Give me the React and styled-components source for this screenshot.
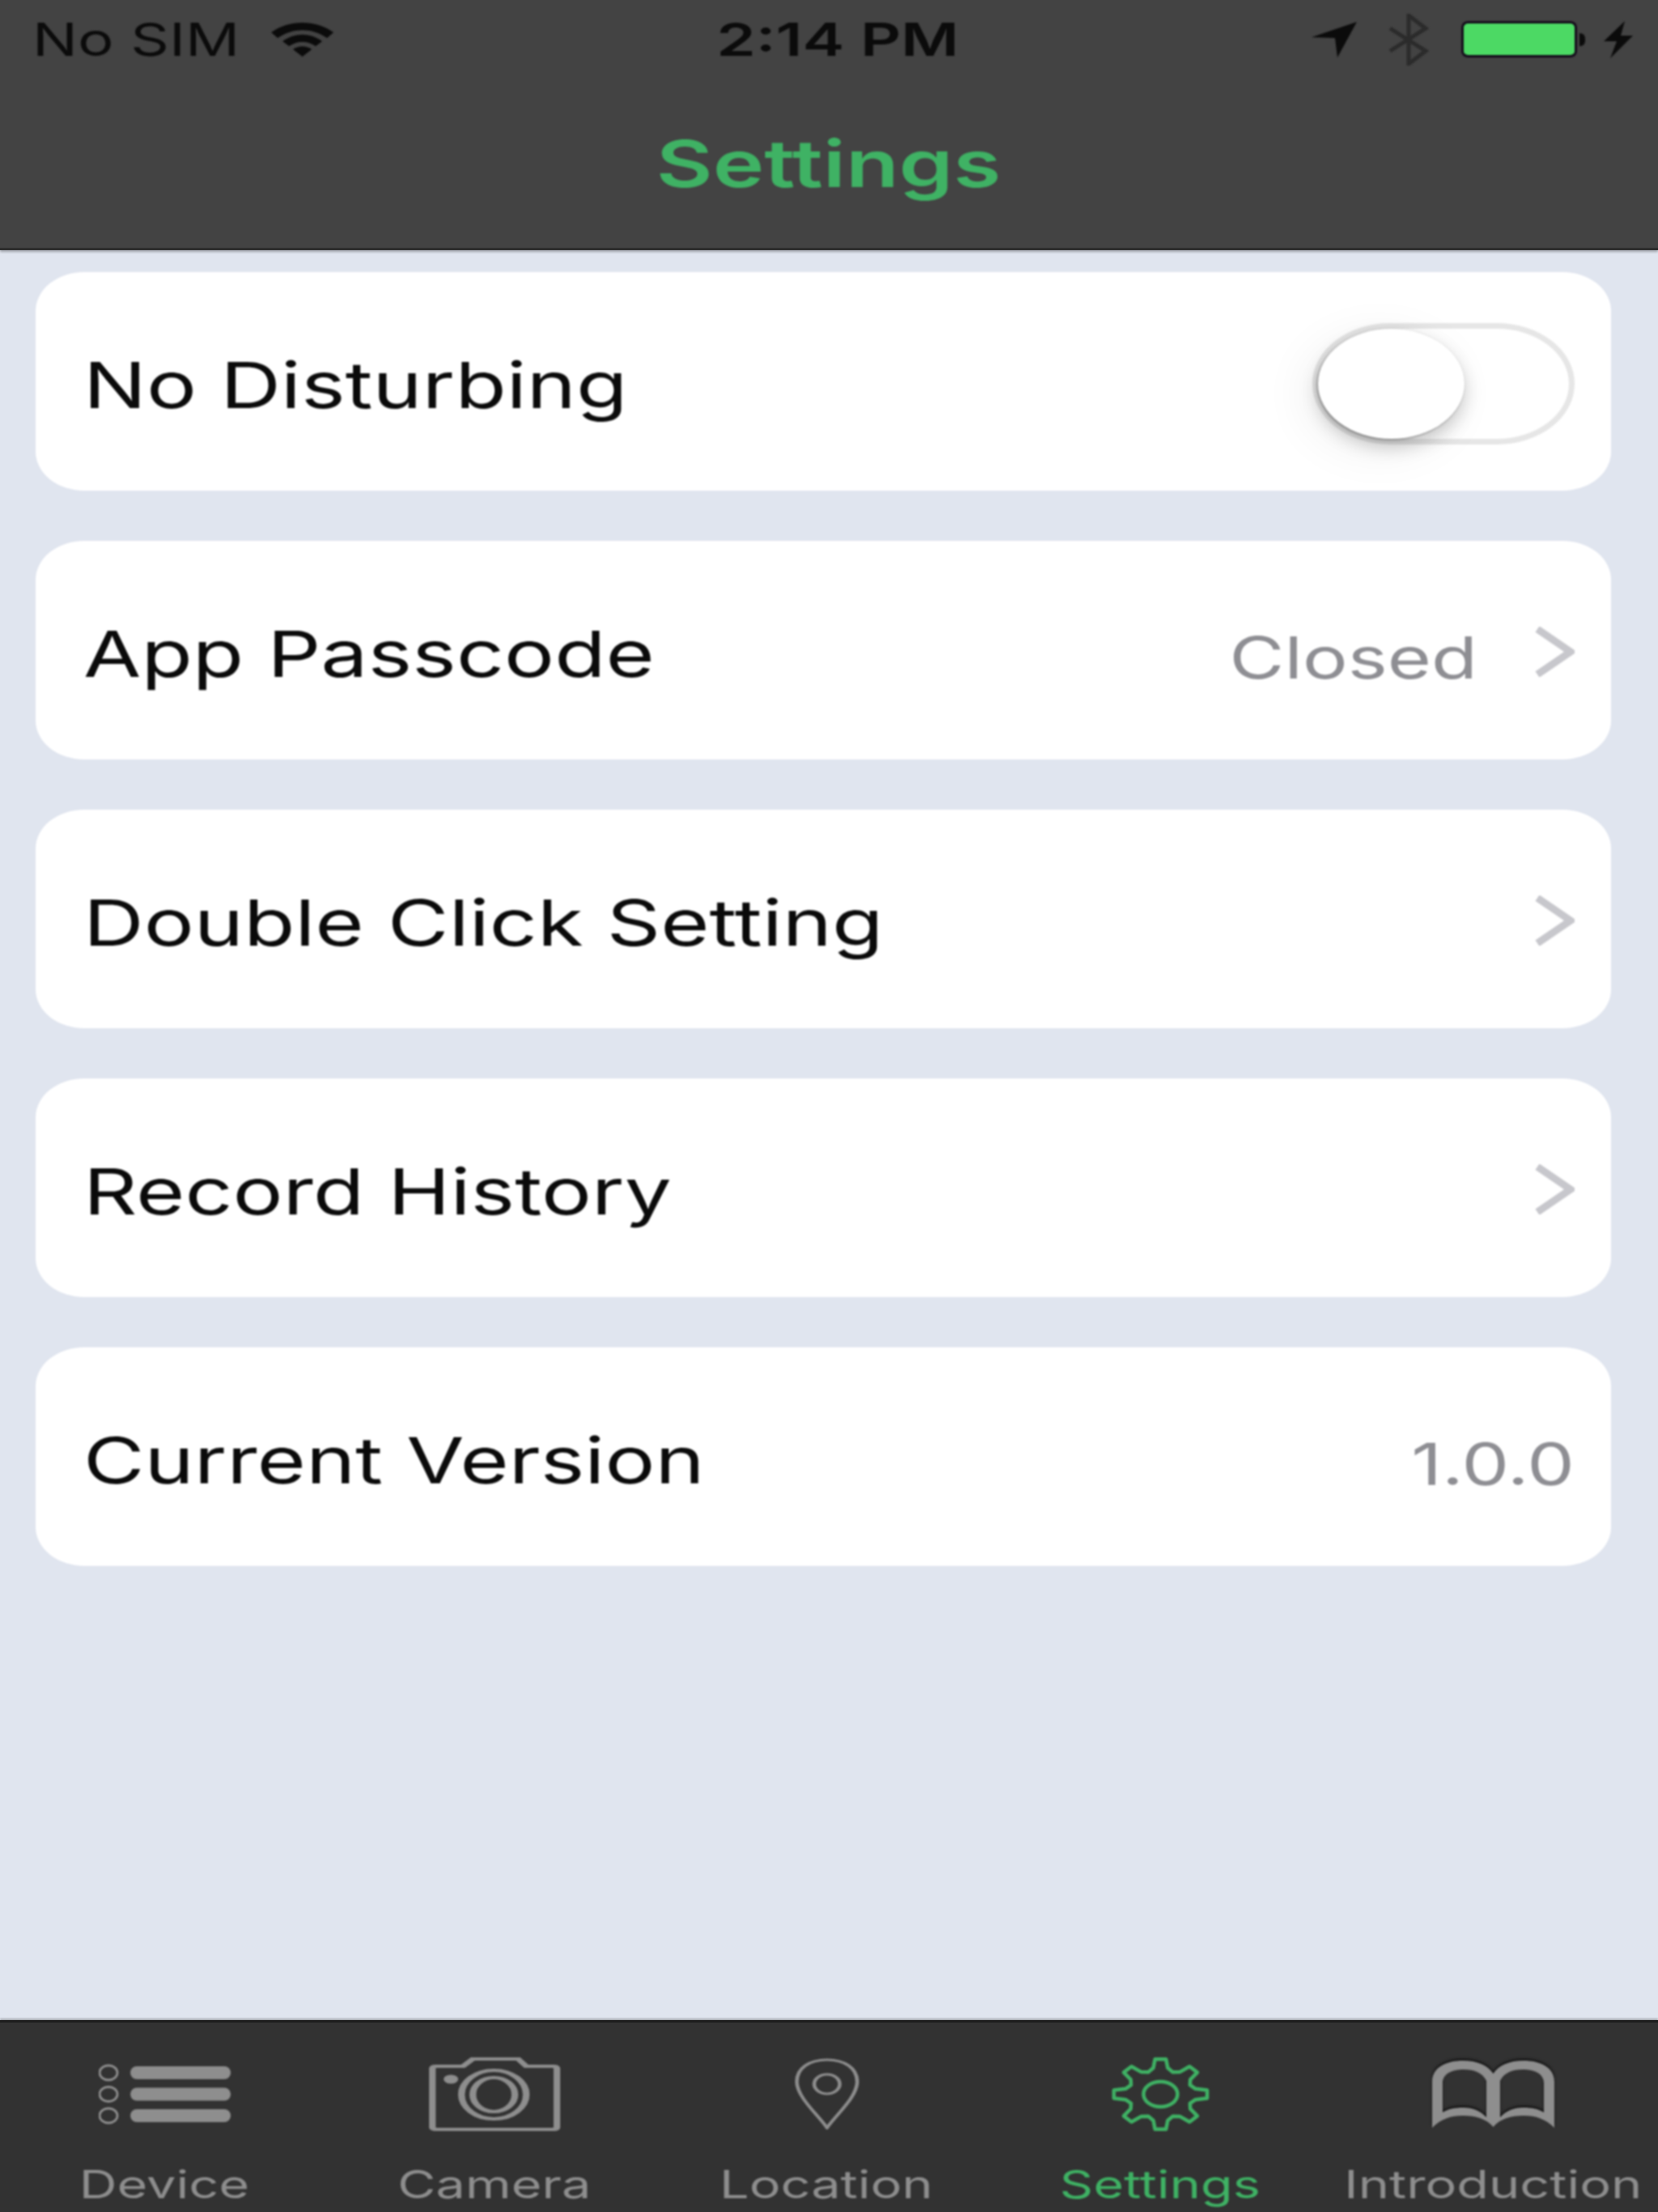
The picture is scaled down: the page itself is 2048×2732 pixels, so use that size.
import React from "react";
import styled, { createGlobalStyle, css } from "styled-components";

const Global = createGlobalStyle`
  html, body {
    margin: 0;
    padding: 0;
    background: #e0e5ef;
  }
  body {
    font-family: Inter, "Liberation Sans", Arial, sans-serif;
  }
`;

// the reference is an upscaled shot, everything on it is a bit soft
const soft = css`
  filter: blur(0.8px);
`;

const Screen = styled.div`
  width: 2048px;
  height: 2732px;
  display: flex;
  flex-direction: column;
  overflow: hidden;
  background: #e0e5ef;
`;

// the whole screenshot is stretched wider than tall, text gets the same treatment
const Stretch = styled.span`
  display: inline-block;
  white-space: nowrap;
  transform: scaleX(${({ $x }) => $x || 1.31});
  transform-origin: ${({ $origin }) => $origin || "left"} center;
`;

const Header = styled.header`
  height: 309px;
  flex: none;
  box-sizing: border-box;
  background: #434343;
  border-bottom: 3px solid #2e2e2e;
  box-shadow: 0 2px 3px rgba(0, 0, 0, 0.3);
  padding: 0 31px 0 40px;
`;

const StatusBar = styled.div`
  ${soft}
  height: 98px;
  display: grid;
  grid-template-columns: 1fr auto 1fr;
  align-items: center;
  color: #0b0b0b;
  font-size: 56px;
`;

const StatusLeft = styled.div`
  display: flex;
  align-items: center;
  gap: 44px;
`;

const StatusTime = styled.div`
  font-weight: 600;
  transform: translateX(6px);
`;

const StatusRight = styled.div`
  display: flex;
  align-items: center;
  justify-content: flex-end;
`;

const Title = styled.h1`
  ${soft}
  margin: 0 9px 0 0;
  padding-top: 50px;
  text-align: center;
  color: #3fb264;
  font-size: 80px;
  line-height: 108px;
  font-weight: 600;
`;

const List = styled.main`
  ${soft}
  flex: 1;
  display: flex;
  flex-direction: column;
  gap: 62px;
  padding: 27px 58px 0 44px;
`;

const Row = styled.section`
  height: 270px;
  box-sizing: border-box;
  display: flex;
  align-items: center;
  padding: 0 45px 0 59px;
  background: #fff;
  border-radius: 60px / 48px;
`;

const Label = styled.div`
  flex: 1;
  color: #0a0a0a;
  font-size: 79px;
  margin-top: 8px;
`;

const Value = styled.div`
  color: #8e8e93;
  font-size: 71px;
  margin-top: 18px;
  margin-right: ${({ $gap }) => $gap || 0}px;
`;

const Chevron = styled.svg`
  width: 49px;
  height: 62px;
  margin-top: 4px;
  flex: none;
`;

const Toggle = styled.div`
  position: relative;
  width: 324px;
  height: 150px;
  box-sizing: border-box;
  border: 7px solid #e6e6e6;
  border-radius: 96px / 75px;
  margin-top: 6px;
`;

const Thumb = styled.div`
  position: absolute;
  left: 0;
  top: 0;
  width: 181px;
  height: 136px;
  border-radius: 50%;
  background: #fff;
  box-shadow: -1px 1px 3px rgba(0, 0, 0, 0.4), 0 10px 22px rgba(0, 0, 0, 0.2),
    -14px 12px 60px rgba(0, 0, 0, 0.07);
`;

const TabBar = styled.nav`
  height: 237px;
  flex: none;
  box-sizing: border-box;
  display: grid;
  grid-template-columns: 406px 410px 410px 414px 408px;
  background: #323232;
  border-top: 3px solid #1d1d1d;
  box-shadow: 0 -2px 2px rgba(0, 0, 0, 0.25);
`;

const Tab = styled.div`
  ${soft}
  display: flex;
  flex-direction: column;
  align-items: center;
  color: ${({ $active }) => ($active ? "#3fb264" : "#8e8e8e")};
`;

const TabIcon = styled.div`
  height: 170px;
  box-sizing: border-box;
  padding-top: 6px;
  display: flex;
  align-items: center;
  justify-content: center;
  svg {
    display: block;
  }
`;

const TabLabel = styled.div`
  font-size: 48px;
  line-height: 60px;
`;

const Gap = styled.div`
  flex: none;
  width: ${({ $w }) => $w}px;
`;

const BookSvg = styled.svg`
  overflow: visible;
  filter: drop-shadow(0 -2px 1.5px #0c0c0c);
`;

const Wifi = () => (
  <svg width="77" height="42" viewBox="0 0 77 42">
    <path d="M0 12 C22 -4 55 -4 77 12 L69 19 C50 6 27 6 8 19 Z" fill="#0b0b0b" />
    <path d="M14 23 C29 12 48 12 63 23 L55 29 C44 22 33 22 22 29 Z" fill="#0b0b0b" />
    <path d="M27 33 C34 28 43 28 50 33 L38.5 42 Z" fill="#0b0b0b" />
  </svg>
);

const Arrow = () => (
  <svg width="56" height="44" viewBox="0 0 56 44">
    <path d="M0 19 L56 0 L32 44 L29 20 Z" fill="#0b0b0b" />
  </svg>
);

const Bluetooth = () => (
  <svg width="50" height="64" viewBox="0 0 50 64" fill="none" stroke="#2b2b2b" strokeWidth="5">
    <path d="M2 18 L46 46 L25 62 L25 2 L46 18 L2 46" />
  </svg>
);

const Battery = () => (
  <svg width="158" height="46" viewBox="0 0 158 46">
    <rect x="1.5" y="1.5" width="140" height="42" rx="7" ry="6" fill="#4cd964" stroke="#14091a" strokeWidth="3" />
    <path d="M146 15 C152 15 153 19 153 23 C153 27 152 31 146 31 Z" fill="#0b0b0b" />
  </svg>
);

const Bolt = () => (
  <svg width="36" height="46" viewBox="0 0 36 46">
    <path d="M26 0 L0 25 L16 25 L8 46 L36 18 L21 18 Z" fill="#0b0b0b" />
  </svg>
);

const ListIcon = () => (
  <svg width="163" height="75" viewBox="0 0 163 75" fill="none">
    {[11, 37.5, 64].map(y => (
      <g key={y}>
        <ellipse cx="12" cy={y} rx="11" ry="9" stroke="#8e8e8e" strokeWidth="2.8" />
        <rect x="39" y={y - 8} width="124" height="16" rx="8" fill="#8e8e8e" />
      </g>
    ))}
  </svg>
);

const CameraIcon = () => (
  <svg width="162" height="91" viewBox="0 0 81 91" preserveAspectRatio="none" fill="none" stroke="#8e8e8e" strokeWidth="4.2">
    <path d="M4 11 H21 L27 2 H55 L60 11 H77 Q79 11 79 15 V85 Q79 89 77 89 H4 Q2 89 2 85 V15 Q2 11 4 11 Z" />
    <ellipse cx="40" cy="46" rx="20" ry="30" />
    <ellipse cx="40" cy="46" rx="13" ry="21" />
    <ellipse cx="13.5" cy="27" rx="4.5" ry="5.5" fill="#8e8e8e" stroke="none" />
  </svg>
);

const PinIcon = () => (
  <svg width="79" height="88" viewBox="0 0 52.67 88" preserveAspectRatio="none" fill="none" stroke="#8e8e8e" strokeWidth="3">
    <path d="M26.33 86 C19 70 1.5 48 1.5 29 C1.5 12 12 2 26.33 2 C40.7 2 51.2 12 51.2 29 C51.2 48 33.7 70 26.33 86 Z" />
    <ellipse cx="26.33" cy="32" rx="10.5" ry="12" />
  </svg>
);

const gearPath = () => {
  // 8 teeth going round the wheel, stretched to the same ratio as the picture
  const pts = [];
  const cx = 60.5;
  const cy = 45.5;
  const step = Math.PI / 8;
  const at = (t, r) =>
    `${(cx + Math.cos(t) * r * 58).toFixed(1)} ${(cy + Math.sin(t) * r * 43.5).toFixed(1)}`;
  for (let i = 0; i < 8; i++) {
    const a = (i * Math.PI) / 4 - Math.PI / 2;
    pts.push(at(a - step, 0.68));
    pts.push(at(a - step * 0.52, 0.76));
    pts.push(at(a - step * 0.3, 1));
    pts.push(at(a + step * 0.3, 1));
    pts.push(at(a + step * 0.52, 0.76));
  }
  return `M${pts.join(" L")} Z`;
};

const GearIcon = () => (
  <svg width="121" height="91" viewBox="0 0 121 91" fill="none" stroke="#3fb264" strokeWidth="4.5">
    <path d={gearPath()} strokeLinejoin="round" />
    <ellipse cx="60.5" cy="45.5" rx="21" ry="15.5" />
  </svg>
);

const BookIcon = () => (
  <BookSvg width="151" height="83" viewBox="0 0 151 83">
    <path
      d="M0 83 V26 C0 8 18 0 38 0 C56 0 69 6 75.5 16 C82 6 95 0 113 0 C133 0 151 8 151 26 V83 C140 72 128 68 113 68 C97 68 84 72 75.5 82 C67 72 54 68 38 68 C23 68 11 72 0 83 Z M13 64 C19 60 27 58 39 58 C50 58 60 62 67 70 V25 C62 15 52 11 39 11 C25 11 13 16 13 28 Z M138 64 V28 C138 16 126 11 112 11 C99 11 89 15 84 25 V70 C91 62 101 58 112 58 C124 58 132 60 138 64 Z"
      fill="#8e8e8e"
      fillRule="evenodd"
    />
  </BookSvg>
);

const tabs = [
  { name: "Device", icon: <ListIcon /> },
  { name: "Camera", icon: <CameraIcon /> },
  { name: "Location", icon: <PinIcon /> },
  { name: "Settings", icon: <GearIcon />, active: true },
  { name: "Introduction", icon: <BookIcon /> }
];

const More = () => (
  <Chevron viewBox="0 0 49 62" fill="none" stroke="#c7c7cc" strokeWidth="9">
    <path d="M3 3 L44 31 L3 59" />
  </Chevron>
);

export default function App() {
  return (
    <Screen>
      <Global />
      <Header>
        <StatusBar>
          <StatusLeft>
            <Gap $w={251}>
              <Stretch $x={1.326}>No SIM</Stretch>
            </Gap>
            <Wifi />
          </StatusLeft>
          <StatusTime>
            <Stretch $x={1.39} $origin="center">2:14 PM</Stretch>
          </StatusTime>
          <StatusRight>
            <Arrow />
            <Gap $w={39} />
            <Bluetooth />
            <Gap $w={40} />
            <Battery />
            <Gap $w={18} />
            <Bolt />
          </StatusRight>
        </StatusBar>
        <Title>
          <Stretch $x={1.343} $origin="center">Settings</Stretch>
        </Title>
      </Header>
      <List>
        <Row>
          <Label>
            <Stretch>No Disturbing</Stretch>
          </Label>
          <Toggle>
            <Thumb />
          </Toggle>
        </Row>
        <Row>
          <Label>
            <Stretch>App Passcode</Stretch>
          </Label>
          <Value $gap={71}>
            <Stretch $origin="right">Closed</Stretch>
          </Value>
          <More />
        </Row>
        <Row>
          <Label>
            <Stretch>Double Click Setting</Stretch>
          </Label>
          <More />
        </Row>
        <Row>
          <Label>
            <Stretch>Record History</Stretch>
          </Label>
          <More />
        </Row>
        <Row>
          <Label>
            <Stretch>Current Version</Stretch>
          </Label>
          <Value>
            <Stretch $origin="right">1.0.0</Stretch>
          </Value>
        </Row>
      </List>
      <TabBar>
        {tabs.map(tab => (
          <Tab key={tab.name} $active={tab.active}>
            <TabIcon>{tab.icon}</TabIcon>
            <TabLabel>
              <Stretch $x={1.35} $origin="center">{tab.name}</Stretch>
            </TabLabel>
          </Tab>
        ))}
      </TabBar>
    </Screen>
  );
}
